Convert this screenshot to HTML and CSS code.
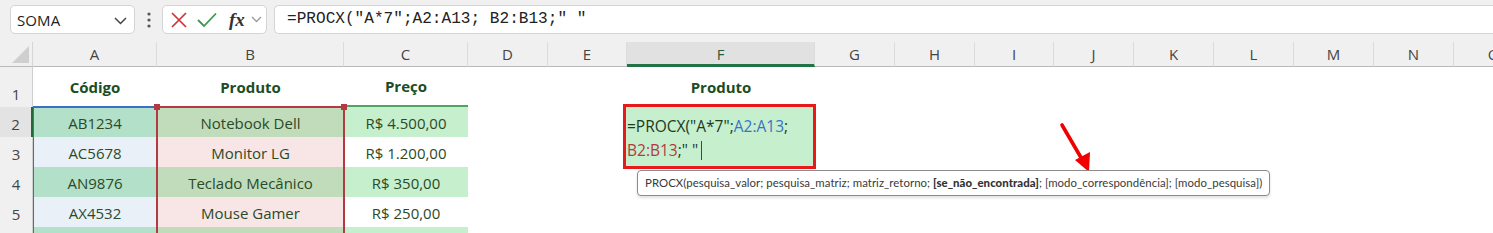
FILE: index.html
```html
<!DOCTYPE html>
<html lang="pt">
<head>
<meta charset="utf-8">
<title>PROCX</title>
<link rel="stylesheet" href="styles.css">
</head>
<body>
<div class="app">
  <div class="toolbar">
    <div class="namebox">
      <span class="name">SOMA</span>
      <svg class="chev" width="13" height="8" viewBox="0 0 13 8"><polyline points="1,1 6.5,6.5 12,1" fill="none" stroke="#444" stroke-width="1.5"/></svg>
    </div>
    <div class="dots">
      <svg width="6" height="16" viewBox="0 0 6 16"><circle cx="3" cy="2" r="1.6" fill="#555"/><circle cx="3" cy="8" r="1.6" fill="#555"/><circle cx="3" cy="14" r="1.6" fill="#555"/></svg>
    </div>
    <div class="fbtns">
      <svg class="btn-x" width="18" height="18" viewBox="0 0 18 18"><path d="M2 2 L16 16 M16 2 L2 16" stroke="#d13438" stroke-width="1.7" fill="none"/></svg>
      <svg class="btn-ok" width="20" height="16" viewBox="0 0 20 16"><polyline points="1,8 7,14 19,1.5" fill="none" stroke="#3a9a4a" stroke-width="1.8"/></svg>
      <span class="fx">fx</span>
      <svg class="chev-s" width="11" height="7" viewBox="0 0 11 7"><polyline points="1,1 5.5,5.5 10,1" fill="none" stroke="#9a9a9a" stroke-width="1.3"/></svg>
    </div>
    <div class="finput">=PROCX("A*7";A2:A13; B2:B13;" "</div>
  </div>

  <div class="sheet">
    <div class="corner"><svg width="17" height="17" viewBox="0 0 17 17"><polygon points="17,0 17,17 0,17" fill="#cfcfcf"/></svg></div>
    <div class="ch">A</div>
    <div class="ch">B</div>
    <div class="ch">C</div>
    <div class="ch">D</div>
    <div class="ch">E</div>
    <div class="ch ch-active">F</div>
    <div class="ch">G</div>
    <div class="ch">H</div>
    <div class="ch">I</div>
    <div class="ch">J</div>
    <div class="ch">K</div>
    <div class="ch">L</div>
    <div class="ch">M</div>
    <div class="ch">N</div>
    <div class="ch">O</div>

    <div class="rh">1</div>
    <div class="cell head">Código</div>
    <div class="cell head">Produto</div>
    <div class="cell head head-c">Preço</div>
    <div class="cell blank"></div>
    <div class="cell blank"></div>
    <div class="cell head">Produto</div>
    <div class="cell blank span-rest"></div>

    <div class="rh rh-active">2</div>
    <div class="cell a-dark">AB1234</div>
    <div class="cell b-dark">Notebook Dell</div>
    <div class="cell c-dark">R$ 4.500,00</div>
    <div class="cell blank span-all"></div>

    <div class="rh">3</div>
    <div class="cell a-light">AC5678</div>
    <div class="cell b-light">Monitor LG</div>
    <div class="cell c-light">R$ 1.200,00</div>
    <div class="cell blank span-all"></div>

    <div class="rh">4</div>
    <div class="cell a-dark">AN9876</div>
    <div class="cell b-dark">Teclado Mecânico</div>
    <div class="cell c-dark">R$ 350,00</div>
    <div class="cell blank span-all"></div>

    <div class="rh">5</div>
    <div class="cell a-light">AX4532</div>
    <div class="cell b-light">Mouse Gamer</div>
    <div class="cell c-light">R$ 250,00</div>
    <div class="cell blank span-all"></div>

    <div class="rh"></div>
    <div class="cell a-dark"></div>
    <div class="cell b-dark"></div>
    <div class="cell c-dark"></div>
    <div class="cell blank span-all"></div>

    <div class="range-a"></div>
    <div class="range-b">
      <span class="handle h-l"></span>
      <span class="handle h-r"></span>
    </div>

    <div class="editor">
      <div class="ed-line"><span class="t">=PROCX("A*7";</span><span class="ref-a">A2:A13</span><span class="t">;</span></div>
      <div class="ed-line"><span class="ref-b">B2:B13</span><span class="t">;" "</span><span class="caret"></span></div>
    </div>

    <svg class="arrow" width="44" height="56" viewBox="0 0 44 56">
      <line x1="7" y1="3" x2="28" y2="39" stroke="#f00000" stroke-width="3.6" stroke-linecap="round"/>
      <polygon points="20,38 35,30 34,50" fill="#f00000"/>
    </svg>

    <div class="tooltip">PROCX(pesquisa_valor; pesquisa_matriz; matriz_retorno; <b>[se_não_encontrada]</b>; [modo_correspondência]; [modo_pesquisa])</div>
  </div>
</div>
</body>
</html>
```

FILE: styles.css
```css
* { box-sizing: border-box; }

html, body {
  margin: 0;
  padding: 0;
  background: #ffffff;
  overflow: hidden;
}

.app {
  width: 1493px;
  height: 233px;
  overflow: hidden;
  font-family: "Open Sans", "Liberation Sans", sans-serif;
}

/* ---------- toolbar ---------- */
.toolbar {
  height: 42px;
  background: #f0f0f0;
  display: flex;
  align-items: flex-start;
  padding: 5px 0 0 10px;
}

.namebox {
  width: 125px;
  height: 29px;
  background: #fff;
  border: 1px solid #d4d4d4;
  border-radius: 5px;
  display: flex;
  align-items: center;
  justify-content: space-between;
  padding: 0 7px 0 6px;
}

.name {
  font-size: 15px;
  color: #222;
  letter-spacing: 0.1px;
}

.chev { margin-top: 2px; }

.dots {
  width: 27px;
  height: 29px;
  display: flex;
  align-items: center;
  justify-content: center;
}

.fbtns {
  width: 105px;
  height: 29px;
  background: #fff;
  border: 1px solid #d4d4d4;
  border-radius: 5px;
  display: flex;
  align-items: center;
  padding: 0 0 0 7px;
}

.btn-x { margin-right: 9px; }
.btn-ok { margin-right: 12px; }

.fx {
  font-family: "Liberation Serif", "DejaVu Serif", serif;
  font-style: italic;
  font-weight: bold;
  font-size: 19px;
  color: #333;
  margin-right: 6px;
  line-height: 1;
}

.finput {
  flex: 1;
  height: 29px;
  margin-left: 7px;
  background: #fff;
  border: 1px solid #d4d4d4;
  border-right: none;
  border-radius: 5px 0 0 5px;
  font-family: "Liberation Mono", "DejaVu Sans Mono", monospace;
  font-size: 16.1px;
  color: #222;
  line-height: 27px;
  padding-left: 12px;
  white-space: pre;
}

/* ---------- sheet ---------- */
.sheet {
  position: relative;
  display: grid;
  grid-template-columns: 33px 124px 187px 124px 80px 79px 188px 80px 80px 79px 80px 80px 80px 80px 80px 80px;
  grid-template-rows: 25px 40px 30px 30px 30px 30px 30px;
  background: #fff;
}

.corner {
  background: #f0f0f0;
  border-bottom: 1px solid #b9b9b9;
  border-right: 1px solid #d6d6d6;
  display: flex;
  align-items: flex-end;
  justify-content: flex-end;
  padding: 0 3px 3px 0;
}

.ch {
  background: #f0f0f0;
  border-bottom: 1px solid #b9b9b9;
  border-right: 1px solid #dcdcdc;
  color: #444;
  font-size: 15px;
  display: flex;
  align-items: center;
  justify-content: center;
  padding-bottom: 1px;
}

.ch-active {
  background: #e1e1e1;
  border-bottom: 3px solid #217346;
  color: #2a5a36;
  padding-top: 2px;
}

.rh {
  background: #f0f0f0;
  border-right: 1px solid #cfcfcf;
  color: #444;
  font-size: 15px;
  display: flex;
  align-items: flex-end;
  justify-content: center;
  padding-bottom: 2px;
  line-height: 22px;
}

.rh-active {
  background: #e3e3e3;
  border-right: 2px solid #1e6b3a;
}

.cell {
  display: flex;
  align-items: center;
  justify-content: center;
  font-size: 15px;
  color: #2a4a28;
  white-space: nowrap;
  padding-top: 1px;
}

.head {
  font-weight: bold;
  color: #1b4d23;
  padding-bottom: 2px;
}

.head-c { border-bottom: 2px solid #4fa463; }

.blank { background: #fff; }
.span-rest { grid-column: 8 / -1; }
.span-all { grid-column: 5 / -1; }

.a-dark { background: #b2e0c8; }
.a-light { background: #eaf0f8; }
.b-dark { background: #c0dcba; }
.b-light { background: #f8e6e6; }
.c-dark { background: #c6efce; }
.c-light { background: #ffffff; }

/* ---------- range highlights (overlays) ---------- */
.range-a {
  position: absolute;
  left: 33px;
  top: 64px;
  width: 125px;
  height: 200px;
  border-top: 2px solid #3a6fc2;
  border-left: 1px solid #3a6fc2;
  pointer-events: none;
}

.range-b {
  position: absolute;
  left: 156px;
  top: 64px;
  width: 189px;
  height: 200px;
  border: 2px solid #b23a41;
  border-bottom: none;
  pointer-events: none;
}

.handle {
  position: absolute;
  top: -4px;
  width: 6px;
  height: 6px;
  background: #b23a41;
}

.h-l { left: -4px; }
.h-r { right: -4px; }

/* ---------- cell editor ---------- */
.editor {
  position: absolute;
  left: 623px;
  top: 62px;
  width: 193px;
  height: 65px;
  background: #c6efce;
  border: 3px solid #e8191b;
  padding: 7px 0 0 1px;
  font-size: 15.5px;
  line-height: 24px;
  white-space: nowrap;
}

.ed-line { height: 24px; display: flex; align-items: center; }
.t { color: #1d3a1d; white-space: pre; }
.ref-a { color: #3b72c6; }
.ref-b { color: #b23a41; }

.caret {
  display: inline-block;
  width: 1px;
  height: 19px;
  background: #444;
  margin-left: 3px;
}

/* ---------- arrow ---------- */
.arrow {
  position: absolute;
  left: 1055px;
  top: 80px;
}

/* ---------- tooltip ---------- */
.tooltip {
  position: absolute;
  left: 637px;
  top: 128px;
  height: 26px;
  padding: 0 7px;
  background: #fff;
  border: 1px solid #8c8c8c;
  border-radius: 4px;
  box-shadow: 0 2px 3px rgba(0, 0, 0, 0.12);
  font-family: Lato, "Open Sans", sans-serif;
  font-size: 11.4px;
  letter-spacing: 0.05px;
  line-height: 24px;
  color: #3a3a3a;
  white-space: nowrap;
}

.tooltip b { color: #333; font-weight: 900; }
```
